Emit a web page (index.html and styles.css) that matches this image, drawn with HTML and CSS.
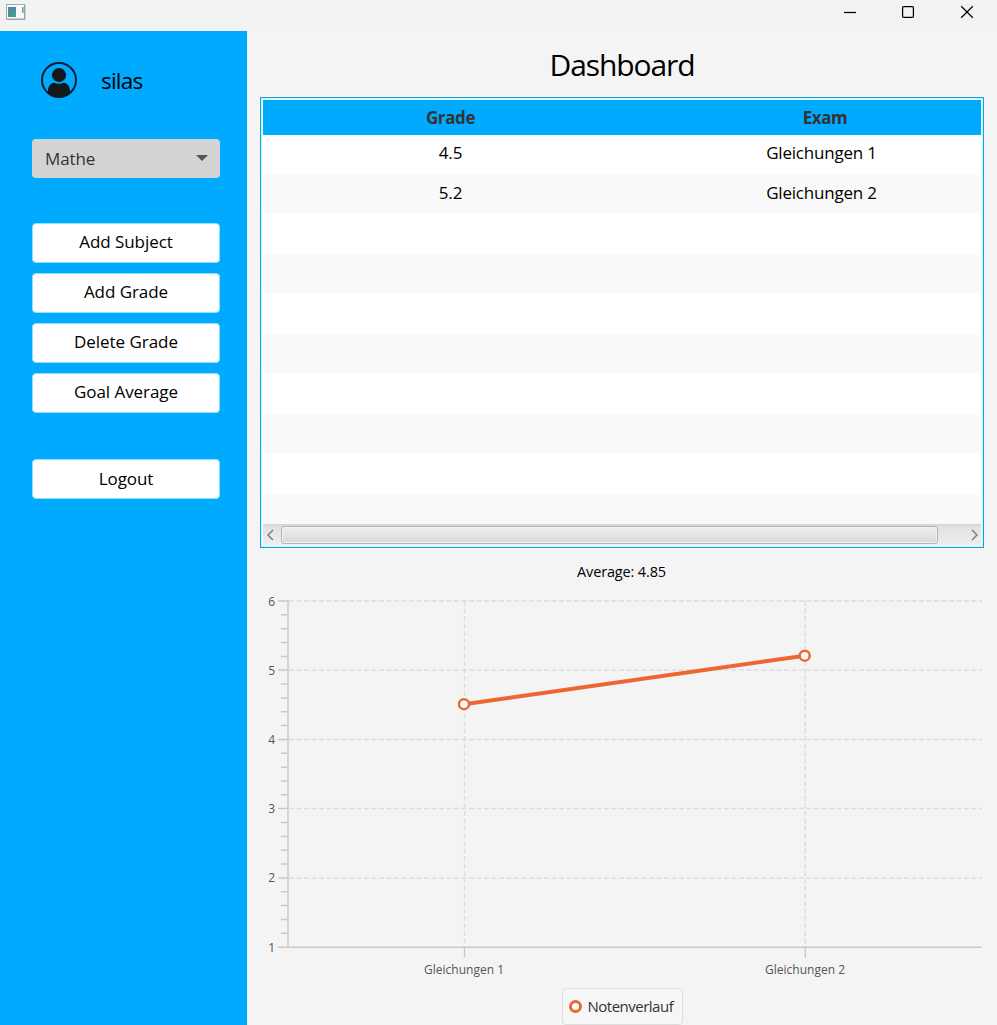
FILE: index.html
```html
<!DOCTYPE html>
<html lang="en">
<head>
<meta charset="utf-8">
<title>Dashboard</title>
<link rel="stylesheet" href="styles.css">
</head>
<body>
<div class="window">
  <header class="titlebar">
    <svg class="app-icon" width="20" height="17" viewBox="0 0 20 17">
      <rect x=".5" y=".5" width="18" height="14.5" fill="#f7f9fb" stroke="#a3a8ad"/>
      <path d="M1 15.5h18V1" fill="none" stroke="#8f9499" stroke-width=".7"/>
      <rect x="2" y="3" width="8" height="10" fill="#4e9c8f"/>
      <path d="M2 3h8v3L2 13z" fill="#4b86ab" opacity=".65"/>
      <rect x="16" y="3" width="1.6" height="6" fill="#5fae8d"/>
    </svg>
    <div class="controls">
      <svg width="14" height="14" viewBox="0 0 14 14"><path d="M1 7.5h12"/></svg>
      <svg width="14" height="14" viewBox="0 0 14 14"><rect x="1.6" y="1.6" width="10.8" height="10.8" rx="1.2"/></svg>
      <svg width="14" height="14" viewBox="0 0 14 14"><path d="M1.2 1.2l11.6 11.6M12.8 1.2L1.2 12.8"/></svg>
    </div>
  </header>
  <div class="body">
    <aside class="sidebar">
      <div class="user">
        <svg width="36" height="36" viewBox="0 0 36 36">
          <circle cx="18" cy="18" r="17" fill="none" stroke="#0e1c28" stroke-width="1.9"/>
          <circle cx="18" cy="13" r="7.1" fill="#15181b"/>
          <path d="M6.8 30.3C6.8 24.5 9.500 20.900 13.300 20.700C16 22 20 22 22.700 20.700C26.500 20.900 29.200 24.500 29.200 30.300C26 34 22 35.200 18 35.200S10 34 6.800 30.300Z" fill="#15181b"/>
        </svg>
        <span class="username">silas</span>
      </div>
      <div class="select"><span>Mathe</span><i class="arrow"></i></div>
      <nav class="actions">
        <button class="btn">Add Subject</button>
        <button class="btn">Add Grade</button>
        <button class="btn">Delete Grade</button>
        <button class="btn">Goal Average</button>
      </nav>
      <button class="btn logout">Logout</button>
    </aside>
    <main class="main">
      <h1 class="title">Dashboard</h1>
      <section class="table">
        <div class="row head"><span>Grade</span><span>Exam</span></div>
        <div class="rows">
          <div class="row first"><span>4.5</span><span class="exam">Gleichungen 1</span></div>
          <div class="row alt"><span>5.2</span><span class="exam">Gleichungen 2</span></div>
          <div class="row"></div>
          <div class="row alt"></div>
          <div class="row"></div>
          <div class="row alt"></div>
          <div class="row"></div>
          <div class="row alt"></div>
          <div class="row"></div>
          <div class="row alt"></div>
        </div>
        <div class="scrollbar">
          <svg width="18" height="20" viewBox="0 0 18 20"><path d="M10 5L5 10L10 15"/></svg>
          <div class="thumb"></div>
          <svg class="right" width="18" height="20" viewBox="0 0 18 20"><path d="M9 5L14 10L9 15"/></svg>
        </div>
      </section>
      <p class="average">Average: 4.85</p>
      <svg class="chart" width="724" height="400" viewBox="260 588 724 400">
        <g class="grid">
          <path d="M289 601H982M289 670H982M289 739.500H982M289 808.500H982M289 878H982"/>
          <path d="M464.500 601V947M805.300 601V947"/>
        </g>
        <g class="axis">
          <path d="M288 600V947M278 947.200H982M278 601H288M278 670H288M278 739.500H288M278 808.500H288M278 878H288M464.500 947V957.500M805.300 947V957.500"/>
          <path d="M281 614.800h7M281 628.700h7M281 642.500h7M281 656.400h7M281 684h7M281 697.900h7M281 711.700h7M281 725.600h7M281 753.300h7M281 767.200h7M281 781h7M281 794.800h7M281 822.500h7M281 836.400h7M281 850.200h7M281 864.100h7M281 891.800h7M281 905.600h7M281 919.500h7M281 933.300h7"/>
        </g>
        <g class="labels">
          <text x="275" y="605.500" text-anchor="end">6</text>
          <text x="275" y="675" text-anchor="end">5</text>
          <text x="275" y="744" text-anchor="end">4</text>
          <text x="275" y="813" text-anchor="end">3</text>
          <text x="275" y="882" text-anchor="end">2</text>
          <text x="275" y="952" text-anchor="end">1</text>
          <text x="424" y="974" textLength="80">Gleichungen 1</text>
          <text x="765" y="974" textLength="80">Gleichungen 2</text>
        </g>
        <g class="series">
          <path d="M464 704.200L804.700 655.700"/>
          <circle cx="464" cy="704.200" r="5"/>
          <circle cx="804.700" cy="655.700" r="5"/>
        </g>
      </svg>
      <div class="legend"><i class="dot"></i><span>Notenverlauf</span></div>
    </main>
  </div>
</div>
</body>
</html>
```
FILE: styles.css
```css
* { box-sizing: border-box; }
body { margin: 0; font-family: "Open Sans", "Noto Sans", sans-serif; color: #000; background: #f4f4f4; }
.window { width: 997px; height: 1025px; overflow: hidden; display: flex; flex-direction: column; }
.titlebar { height: 31px; background: #f3f3f3; display: flex; justify-content: space-between; padding: 4px 23px 0 6px; flex: none; }
.controls { display: flex; gap: 44.500px; padding-top: 1px; }
.controls svg { fill: none; stroke: #000; stroke-width: 1.25; }
.controls svg:nth-child(2) { margin: 0 .5px 0 -.5px; }
.body { flex: 1; display: flex; min-height: 0; }
.sidebar { width: 247px; background: #00aaff; padding: 31px 27px 0 32px; display: flex; flex-direction: column; }
.user { display: flex; align-items: center; gap: 24px; height: 36px; padding-left: 9px; }
.username { font-size: 22.500px; letter-spacing: -.8px; }
.select { margin-top: 41px; height: 39px; background: #d3d3d3; border-radius: 4px; display: flex; align-items: center; justify-content: space-between; padding: 0 12px 1px 13px; font-size: 17px; letter-spacing: -.1px; color: #333; flex: none; width: 188px; }
.arrow { border: 6px solid transparent; border-top-color: #555; border-bottom: 0; }
.actions { margin-top: 45px; display: flex; flex-direction: column; gap: 10px; }
.btn { height: 40px; width: 188px; flex: none; border: 1px solid #8be4ff; border-radius: 4px; background: #fff; padding: 0 0 3px; font: 17px "Open Sans", "Noto Sans", sans-serif; letter-spacing: -.05px; color: #000; }
.logout { margin-top: 46px; padding-bottom: 1px; }
.main { flex: 1; padding: 0 13px; display: flex; flex-direction: column; align-items: center; }
.title { margin: 0; height: 66px; line-height: 67px; font-size: 30px; font-weight: 400; letter-spacing: -1.1px; }
.table { width: 724px; height: 451px; flex: none; border: 1px solid #1ba3d6; padding: 2px; background: #f5fdfd; box-shadow: inset 0 0 0 1px #b8f7fb; display: flex; flex-direction: column; overflow: hidden; }
.row { display: grid; grid-template-columns: 375px 374px; text-align: center; height: 42px; background: #fff; font-size: 17px; letter-spacing: -.2px; line-height: 36px; flex: none; }
.row.first { height: 40px; }
.row.alt { height: 38px; background: #f9f9f9; }
.row.head { height: 35px; background: #00aaff; font-weight: 700; letter-spacing: -.4px; color: #333; }
.exam { padding-right: 7px; }
.rows { height: 389px; overflow: hidden; display: flex; flex-direction: column; }
.scrollbar { height: 21px; display: flex; align-items: center; background: linear-gradient(#d2d2d2, #e2e2e2 15%, #eee); }
.scrollbar svg { fill: none; stroke: #777; stroke-width: 1.4; flex: none; }
.thumb { width: 657px; height: 18px; margin: 1px 0 0 -.5px; border: 1px solid #b3b3b3; border-radius: 3px; background: linear-gradient(#f0f0f0, #d8d8d8); box-shadow: inset 0 0 0 1px #f3f3f3; }
.right { margin-left: auto; }
.average { margin: 0; height: 40px; line-height: 48px; font-size: 14.500px; letter-spacing: -.15px; padding-right: 1px; }
.chart { flex: none; }
.grid { fill: none; stroke: #dcdcdc; stroke-width: 1.4; stroke-dasharray: 5 2.500; }
.axis { fill: none; stroke: #c9c9c9; stroke-width: 1.5; }
.labels { font-size: 12px; fill: #555; }
.series { fill: #fff; stroke: #ed6733; stroke-width: 2.500; }
.series path { stroke-width: 4; }
.legend { flex: none; width: 121px; height: 37px; border: 1px solid #dedede; border-radius: 4px; background: #f6f6f6; display: flex; align-items: center; gap: 6px; padding: 0 0 1px 6px; font-size: 15px; letter-spacing: -.5px; color: #333; }
.dot { width: 13px; height: 13px; border: 3px solid #ed6733; border-radius: 50%; background: #fff; }
```
